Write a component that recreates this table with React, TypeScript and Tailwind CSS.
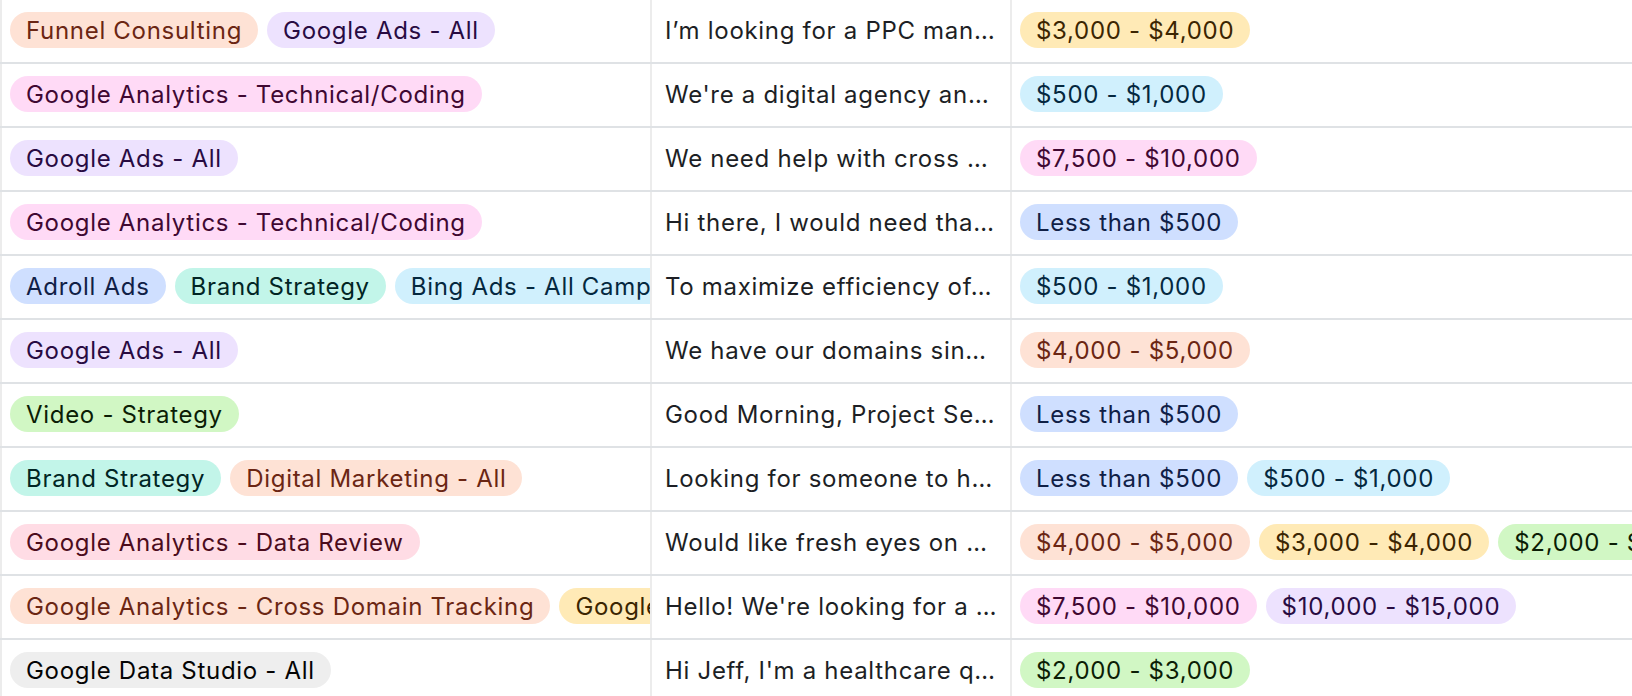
const tone = {
  blue: "bg-[#cfdfff] text-[#102046]",
  cyan: "bg-[#d0f0fd] text-[#04283f]",
  teal: "bg-[#c2f5e9] text-[#012524]",
  green: "bg-[#d1f7c4] text-[#0b1d05]",
  yellow: "bg-[#ffeab6] text-[#3b2501]",
  orange: "bg-[#fee2d5] text-[#6b2613]",
  red: "bg-[#ffdce5] text-[#4c0c1c]",
  pink: "bg-[#ffdaf6] text-[#400832]",
  purple: "bg-[#ede2fe] text-[#280b42]",
  gray: "bg-[#eeeeee] text-[#040404]",
};

type Tone = keyof typeof tone;
type Tag = [string, Tone];

const rows: { services: Tag[]; note: string; budget: Tag[] }[] = [
  {
    services: [["Funnel Consulting", "orange"], ["Google Ads - All", "purple"]],
    note: "I’m looking for a PPC man…",
    budget: [["$3,000 - $4,000", "yellow"]],
  },
  {
    services: [["Google Analytics - Technical/Coding", "pink"]],
    note: "We're a digital agency an…",
    budget: [["$500 - $1,000", "cyan"]],
  },
  {
    services: [["Google Ads - All", "purple"]],
    note: "We need help with cross …",
    budget: [["$7,500 - $10,000", "pink"]],
  },
  {
    services: [["Google Analytics - Technical/Coding", "pink"]],
    note: "Hi there, I would need tha…",
    budget: [["Less than $500", "blue"]],
  },
  {
    services: [["Adroll Ads", "blue"], ["Brand Strategy", "teal"], ["Bing Ads - All Campaigns", "cyan"]],
    note: "To maximize efficiency of…",
    budget: [["$500 - $1,000", "cyan"]],
  },
  {
    services: [["Google Ads - All", "purple"]],
    note: "We have our domains sin…",
    budget: [["$4,000 - $5,000", "orange"]],
  },
  {
    services: [["Video - Strategy", "green"]],
    note: "Good Morning, Project Se…",
    budget: [["Less than $500", "blue"]],
  },
  {
    services: [["Brand Strategy", "teal"], ["Digital Marketing - All", "orange"]],
    note: "Looking for someone to h…",
    budget: [["Less than $500", "blue"], ["$500 - $1,000", "cyan"]],
  },
  {
    services: [["Google Analytics - Data Review", "red"]],
    note: "Would like fresh eyes on …",
    budget: [["$4,000 - $5,000", "orange"], ["$3,000 - $4,000", "yellow"], ["$2,000 - $3,000", "green"]],
  },
  {
    services: [["Google Analytics - Cross Domain Tracking", "orange"], ["Google Ads - Search", "yellow"]],
    note: "Hello! We're looking for a …",
    budget: [["$7,500 - $10,000", "pink"], ["$10,000 - $15,000", "purple"]],
  },
  {
    services: [["Google Data Studio - All", "gray"]],
    note: "Hi Jeff, I'm a healthcare q…",
    budget: [["$2,000 - $3,000", "green"]],
  },
];

function Chip({ label, color }: { label: string; color: Tone }) {
  return (
    <span className={`shrink-0 h-9 px-4 pt-px rounded-full leading-9 whitespace-nowrap ${tone[color]}`}>
      {label}
    </span>
  );
}

export default function App() {
  return (
    <div
      className="h-[696px] w-[1632px] overflow-hidden bg-white text-[24px] tracking-[0.7px] text-[#1d1f25]"
      style={{ fontFamily: "Inter, 'Noto Sans', sans-serif" }}
    >
      {rows.map((row, i) => (
        <div key={i} className="flex h-16 border-b-2 border-[#dfe2e5]">
          <div className="flex w-[652px] shrink-0 gap-[9px] overflow-hidden border-x-2 border-[#ececec] pt-3 pl-2">
            {row.services.map(([label, color]) => (
              <Chip key={label} label={label} color={color} />
            ))}
          </div>
          <div className="w-[360px] shrink-0 overflow-hidden whitespace-nowrap border-r-2 border-[#ececec] pt-[13px] pl-[13px] leading-9">
            {row.note}
          </div>
          <div className="flex min-w-0 flex-1 gap-[9px] overflow-hidden pt-3 pl-2">
            {row.budget.map(([label, color]) => (
              <Chip key={label} label={label} color={color} />
            ))}
          </div>
        </div>
      ))}
    </div>
  );
}
